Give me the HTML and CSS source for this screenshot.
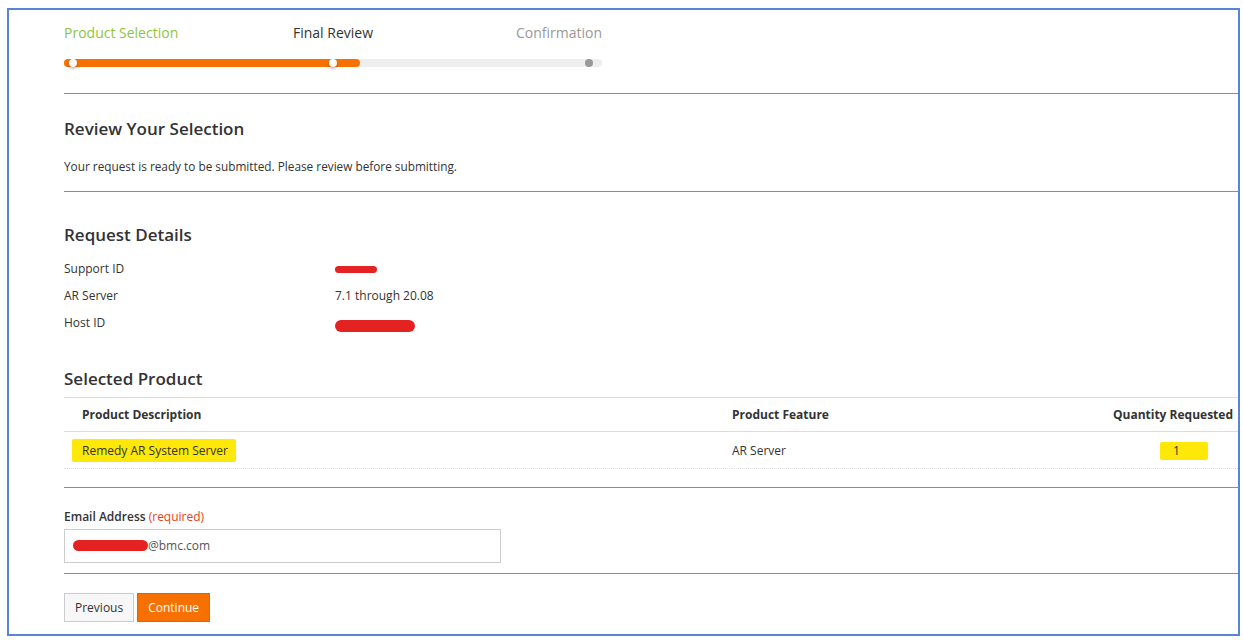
FILE: index.html
```html
<!DOCTYPE html>
<html lang="en">
<head>
    <meta charset="UTF-8">
    <title>Review Your Selection</title>
    <link rel="stylesheet" href="styles.css">
</head>
<body>

<div class="frame">

    <div class="steps">
        <div class="step-labels">
            <span class="step done">Product Selection</span>
            <span class="step current">Final Review</span>
            <span class="step todo">Confirmation</span>
        </div>
        <div class="step-bar">
            <div class="step-fill" style="width: 55%"></div>
            <span class="dot dot-first"></span>
            <span class="dot dot-mid"></span>
            <span class="dot dot-last"></span>
        </div>
    </div>

    <div class="section intro">
        <h2>Review Your Selection</h2>
        <p>Your request is ready to be submitted. Please review before submitting.</p>
    </div>

    <div class="section details">
        <h2>Request Details</h2>
        <div class="detail-row">
            <span class="detail-label">Support ID</span>
            <span class="detail-value"><span class="redact redact-id"></span></span>
        </div>
        <div class="detail-row">
            <span class="detail-label">AR Server</span>
            <span class="detail-value">7.1 through 20.08</span>
        </div>
        <div class="detail-row">
            <span class="detail-label">Host ID</span>
            <span class="detail-value"><span class="redact redact-host"></span></span>
        </div>

        <h2 class="product-title">Selected Product</h2>
        <table class="product-table">
            <thead>
                <tr>
                    <th class="col-desc">Product Description</th>
                    <th class="col-feat">Product Feature</th>
                    <th class="col-qty">Quantity Requested</th>
                </tr>
            </thead>
            <tbody>
                <tr>
                    <td class="col-desc"><span class="marker marker-name">Remedy AR System Server</span></td>
                    <td class="col-feat">AR Server</td>
                    <td class="col-qty"><span class="marker marker-qty">1</span></td>
                </tr>
            </tbody>
        </table>
    </div>

    <div class="section email">
        <label class="field-label">Email Address <span class="required">(required)</span></label>
        <div class="field-input"><span class="redact redact-mail"></span>@bmc.com</div>
    </div>

    <div class="actions">
        <button class="btn btn-prev">Previous</button>
        <button class="btn btn-next">Continue</button>
    </div>

</div>

</body>
</html>
```

FILE: styles.css
```css
body {
    margin: 0;
    padding: 8px 3px 4px 7px;
    background-color: #fff;
    font-family: "Open Sans", Arial, sans-serif;
    color: #333;
}
.frame {
    border: 2px solid #5a85d5;
    height: 628px;
    box-sizing: border-box;
    padding-left: 55px;
}

/* barra de etapas */
.steps {
    padding-top: 13px;
    padding-bottom: 26px;
    border-bottom: 1px solid #f07312;
}
.step-labels,
.step-bar {
    width: 538px;
}
.step-labels {
    display: grid;
    grid-template-columns: 1fr 1fr 1fr;
    font-size: 14px;
    line-height: 20px;
}
.step.done {
    color: #8dc63f;
}
.step.current {
    color: #333;
    text-align: center;
}
.step.todo {
    color: #999;
    text-align: right;
}
.step-bar {
    position: relative;
    margin-top: 16px;
    height: 8px;
    background-color: #eeeeee;
    border-radius: 4px;
}
.step-fill {
    height: 8px;
    background-color: #f77102;
    border-radius: 4px;
}
.dot {
    position: absolute;
    top: 0;
    width: 8px;
    height: 8px;
    border-radius: 50%;
    background-color: #fff;
    box-shadow: 0 2px 3px rgba(0, 0, 0, 0.25);
}
.dot-first {
    left: 5px;
}
.dot-mid {
    left: 265px;
}
.dot-last {
    left: 521px;
    background-color: #999;
    box-shadow: none;
}

/* secoes */
.section {
    border-bottom: 1px solid #f07312;
}
h2 {
    margin: 0;
    font-size: 17px;
    font-weight: 600;
    line-height: 24px;
    color: #333;
}
.intro {
    padding-top: 23px;
    padding-bottom: 16px;
}
.intro p {
    margin: 16px 0 0 0;
    font-size: 11.8px;
    line-height: 18px;
}
.details {
    padding-top: 31px;
    padding-bottom: 18px;
}
.details h2 {
    margin-bottom: 9px;
}
.detail-row {
    display: flex;
    font-size: 12px;
    line-height: 18px;
    padding: 4px 0 5px 0;
}
.detail-label {
    width: 271px;
}
.redact {
    display: inline-block;
    background-color: #e52222;
    border-radius: 6px;
    vertical-align: middle;
}
.redact-id {
    width: 42px;
    height: 7px;
}
.redact-host {
    width: 80px;
    height: 12px;
    margin-top: 4px;
}
.details .product-title {
    margin-top: 30px;
    margin-bottom: 6px;
}
.product-table {
    width: 100%;
    border-collapse: collapse;
    font-size: 12px;
}
.product-table th {
    font-weight: 700;
    text-align: left;
    padding: 8px 6px 8px 18px;
    line-height: 17px;
    border-top: 1px solid #ddd;
    border-bottom: 1px solid #ddd;
}
.product-table td {
    padding: 10px 6px 8px 18px;
    line-height: 18px;
    border-bottom: 1px dotted #ddd;
}
.product-table .col-feat {
    padding-left: 0;
    width: 277px;
}
.product-table .col-qty {
    text-align: right;
    padding-right: 5px;
    width: 200px;
}
.marker {
    background-color: #fde80a;
    border-radius: 2px;
}
.marker-name {
    margin-left: -10px;
    padding: 3px 8px 3px 10px;
}
.marker-qty {
    display: inline-block;
    width: 48px;
    padding: 0 0 0 13px;
    box-sizing: border-box;
    text-align: left;
    margin-right: 25px;
}

/* email */
.email {
    padding-top: 20px;
    padding-bottom: 10px;
}
.field-label {
    display: block;
    font-size: 12px;
    font-weight: 600;
    line-height: 18px;
    color: #333;
}
.required {
    font-weight: 400;
    color: #e8411c;
}
.field-input {
    margin-top: 3px;
    width: 437px;
    height: 34px;
    box-sizing: border-box;
    border: 1px solid #ccc;
    padding: 0 8px;
    font-size: 12px;
    line-height: 32px;
    color: #555;
}
.redact-mail {
    width: 75px;
    height: 11px;
    margin-top: -2px;
}

/* botoes */
.actions {
    display: flex;
    gap: 3px;
    padding-top: 19px;
}
.btn {
    font-family: "Open Sans", Arial, sans-serif;
    font-size: 12px;
    height: 29px;
    padding: 0 10px;
    border: 1px solid #ccc;
    border-radius: 0;
    cursor: pointer;
}
.btn-prev {
    background-color: #f7f7f7;
    color: #333;
}
.btn-next {
    background-color: #f77102;
    border-color: #e06400;
    color: #fff;
}
```
